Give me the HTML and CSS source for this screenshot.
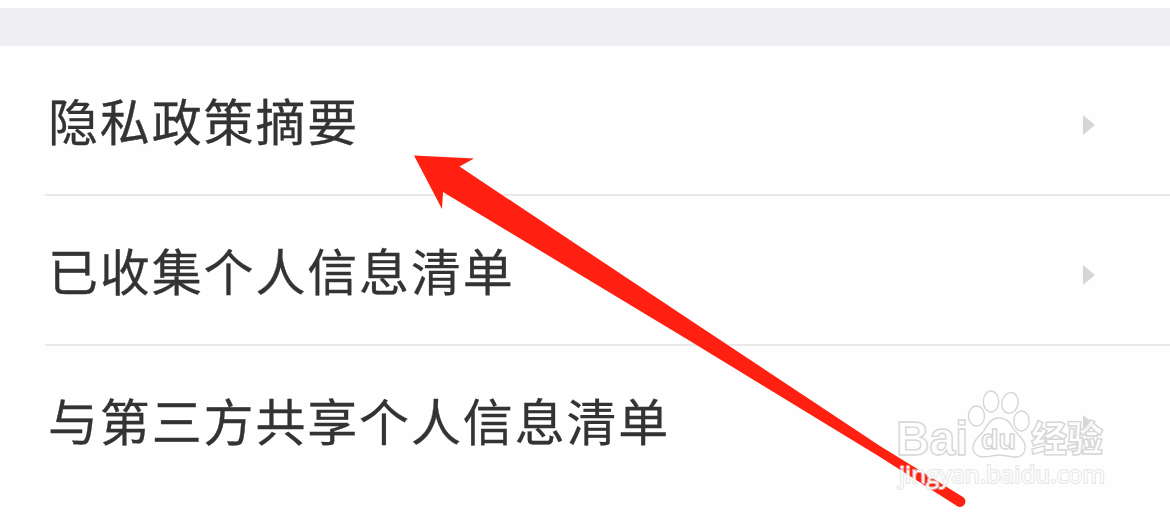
FILE: index.html
```html
<!DOCTYPE html>
<html lang="zh-CN">
<head>
  <meta charset="UTF-8">
  <title>隐私</title>
  <link rel="stylesheet" href="styles.css">
</head>
<body>
  <div class="page">
    <div class="divider"></div>

    <ul class="menu">
      <li class="menu-item">
        <span class="label">隐私政策摘要</span>
        <span class="caret"></span>
      </li>
      <li class="menu-item">
        <span class="label">已收集个人信息清单</span>
        <span class="caret"></span>
      </li>
      <li class="menu-item">
        <span class="label">与第三方共享个人信息清单</span>
        <span class="caret"></span>
      </li>
    </ul>

    <svg class="overlay" viewBox="0 0 1170 516">
      <path class="arrow" d="M414 155.5 L474 158.5 L459.5 166.5 L690 320 L880 446 L963 497 A5 5 0 0 1 957 506 L880 457 L690 341 L443 192 L442 209 Z"/>

      <g class="watermark">
        <text class="brand" x="896" y="455" textLength="72" lengthAdjust="spacingAndGlyphs">Bai</text>
        <ellipse cx="976.5" cy="416" rx="8" ry="10"/>
        <ellipse cx="991" cy="401.5" rx="7.7" ry="10.5"/>
        <ellipse cx="1010" cy="403" rx="8" ry="10.5" transform="rotate(12 1010 403)"/>
        <ellipse cx="1021.5" cy="421" rx="7.7" ry="10"/>
        <path d="M999 418 C990 418 988 425 983 432 C977 438 973 442 973 448 C973 454 978 457 984 457 C990 457 994 455 999 455 C1005 455 1009 457 1015 457 C1022 457 1026 453 1025 445 C1024 438 1017 435 1013 428 C1009 421 1006 418 999 418 Z"/>
        <text class="du" x="981" y="449" textLength="35" lengthAdjust="spacingAndGlyphs">du</text>
        <text class="name" x="1031" y="452" textLength="72" lengthAdjust="spacingAndGlyphs">经验</text>
        <text class="site" x="899" y="482.5" textLength="206" lengthAdjust="spacingAndGlyphs">jingyan.baidu.com</text>
      </g>
    </svg>
  </div>
</body>
</html>
```
FILE: styles.css
```css
body {
  margin: 0;
  background: #fefefe;
  font-family: "Noto Sans CJK SC", sans-serif;
}

.page {
  position: relative;
  height: 516px;
  padding-top: 8px;
  box-sizing: border-box;
  overflow: hidden;
}

.divider {
  height: 38px;
  background: #efeff3;
  border-top: 1px solid #ececec;
  box-sizing: border-box;
}

.menu {
  list-style: none;
  margin: 0;
  padding: 0 0 0 45px;
}

.menu-item {
  display: flex;
  align-items: center;
  justify-content: space-between;
  height: 150px;
  padding: 0 75px 0 3px;
  box-sizing: border-box;
  border-bottom: 2px solid #e9e9e9;
}

.menu-item:last-child {
  border-bottom-color: transparent;
}

.label {
  margin-bottom: 3px;
  font-size: 50px;
  line-height: 74px;
  letter-spacing: 1.85px;
  color: #333;
  -webkit-text-stroke: 0.3px #333;
}

.caret {
  margin-top: 9px;
  border-left: 12px solid #d6d6d6;
  border-top: 10px solid transparent;
  border-bottom: 10px solid transparent;
}

/* arrow and watermark sit above the list */
.overlay {
  position: absolute;
  top: 0;
  left: 0;
  width: 1170px;
  height: 516px;
}

.arrow {
  fill: #ff2012;
}

.watermark {
  fill: #fff;
  fill-opacity: 0.75;
  stroke: #d6d6d6;
  stroke-width: 1.4;
}

.brand,
.du {
  font-family: "Liberation Sans", sans-serif;
  font-weight: bold;
}

.brand {
  font-size: 48px;
}

.du {
  font-size: 27px;
}

.name {
  font-size: 36px;
  font-weight: 900;
}

.site {
  font-family: "Open Sans", sans-serif;
  font-size: 24px;
  fill-opacity: 0.9;
  stroke-width: 2;
  paint-order: stroke;
  stroke: #dcdcdc;
  stroke-opacity: 0.7;
}
```
